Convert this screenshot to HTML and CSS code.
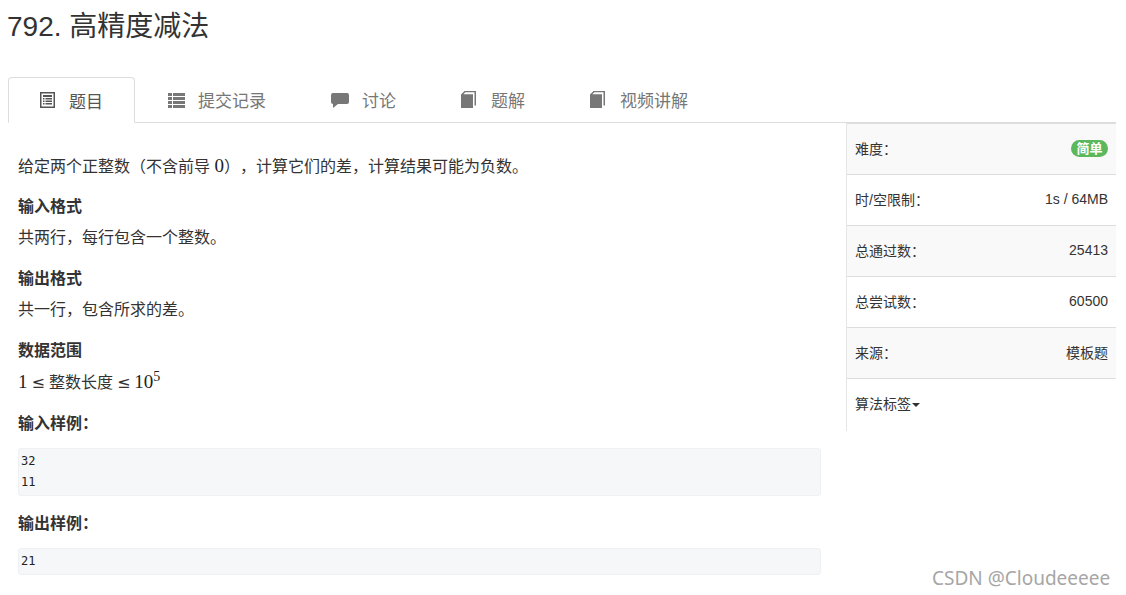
FILE: index.html
```html
<!DOCTYPE html>
<html lang="zh-CN">
<head>
    <meta charset="UTF-8">
    <title>792. 高精度减法</title>
    <link rel="stylesheet" href="styles.css">
</head>
<body>
    <div class="page">
        <h1 class="title">792. 高精度减法</h1>

        <ul class="tabs">
            <li class="tab active">
                <svg class="icon" viewBox="0 0 15 16"><path fill-rule="evenodd" d="M0 0H15V16H0ZM1.500 1.500V14.500H13.500V1.500ZM3 3H12V5H3ZM3 6H4.500V7.500H3ZM5.500 6H12V7.500H5.500ZM3 8.500H4.500V10H3ZM5.500 8.500H12V10H5.500ZM3 11H4.500V12.500H3ZM5.500 11H12V12.500H5.500Z"/></svg>
                题目
            </li>
            <li class="tab">
                <svg class="icon icon-list" viewBox="0 0 17 16"><path d="M0 1H4V4H0ZM5 1H17V4H5ZM0 5H4V8H0ZM5 5H17V8H5ZM0 9H4V12H0ZM5 9H17V12H5ZM0 13H4V16H0ZM5 13H17V16H5Z"/></svg>
                提交记录
            </li>
            <li class="tab">
                <svg class="icon icon-comment" viewBox="0 0 18 16"><path d="M2 1H16Q18 1 18 3V10Q18 12 16 12H7L2 16V12Q0 12 0 10V3Q0 1 2 1Z"/></svg>
                讨论
            </li>
            <li class="tab">
                <svg class="icon icon-book" viewBox="0 0 15 17"><path d="M0 3.500L3.500 0H15V14.500H13.500V1.300H4.300L2.400 3.200H12V17H0Z"/></svg>
                题解
            </li>
            <li class="tab">
                <svg class="icon icon-book" viewBox="0 0 15 17"><path d="M0 3.500L3.500 0H15V14.500H13.500V1.300H4.300L2.400 3.200H12V17H0Z"/></svg>
                视频讲解
            </li>
        </ul>

        <div class="main">
            <div class="content">
                <p class="intro">给定两个正整数（不含前导 <span class="math">0</span>），计算它们的差，计算结果可能为负数。</p>
                <h4>输入格式</h4>
                <p class="after-head">共两行，每行包含一个整数。</p>
                <h4>输出格式</h4>
                <p class="after-head">共一行，包含所求的差。</p>
                <h4>数据范围</h4>
                <p class="after-head"><span class="math">1</span><span class="rel">≤</span>整数长度<span class="rel">≤</span><span class="math">10<sup>5</sup></span></p>
                <h4>输入样例：</h4>
                <pre class="sample">32
11</pre>
                <h4>输出样例：</h4>
                <pre class="sample">21</pre>
            </div>

            <div class="side">
                <div class="side-row striped">
                    <span>难度：</span>
                    <span class="badge">简单</span>
                </div>
                <div class="side-row">
                    <span>时/空限制：</span>
                    <span>1s / 64MB</span>
                </div>
                <div class="side-row striped">
                    <span>总通过数：</span>
                    <span>25413</span>
                </div>
                <div class="side-row">
                    <span>总尝试数：</span>
                    <span>60500</span>
                </div>
                <div class="side-row striped">
                    <span>来源：</span>
                    <span>模板题</span>
                </div>
                <div class="side-row last">
                    <span>算法标签<i class="caret"></i></span>
                </div>
            </div>
        </div>
    </div>

    <div class="watermark">CSDN @Cloudeeeee</div>
</body>
</html>
```

FILE: styles.css
```css
body {
    font-family: "Liberation Sans", "Noto Sans CJK SC", sans-serif;
    color: #333;
    background-color: #fff;
    margin: 0;
    padding: 0;
    text-spacing-trim: space-all;
}

.page {
    width: 1108px;
    margin-left: 8px;
}

.title {
    margin: 0 0 0 -1px;
    padding-top: 7px;
    height: 77px;
    box-sizing: border-box;
    font-size: 28px;
    line-height: 40px;
    font-weight: 400;
}

.tabs {
    display: flex;
    list-style: none;
    margin: 0;
    padding: 0;
    height: 46px;
    box-sizing: border-box;
    border-bottom: 1px solid #ddd;
}

.tab {
    display: flex;
    align-items: center;
    height: 45px;
    padding: 0 31px 0 32px;
    font-size: 17px;
    color: #777;
    border: 1px solid transparent;
    box-sizing: border-box;
}

.tab.active {
    height: 46px;
    padding: 0 31px 0 31px;
    color: #555;
    border-color: #ddd;
    border-bottom-color: #fff;
    border-radius: 4px 4px 0 0;
    background-color: #fff;
}

.icon {
    width: 15px;
    height: 16px;
    margin-right: 14px;
    fill: currentColor;
    flex: none;
}

.icon-list {
    width: 17px;
    margin-right: 13px;
}

.icon-comment {
    width: 18px;
    margin-right: 13px;
}

.icon-book {
    height: 17px;
    margin-right: 15px;
}

.main {
    display: flex;
}

.content {
    width: 838px;
    box-sizing: border-box;
    padding: 31px 25px 0 10px;
}

p {
    margin: 0;
    font-size: 16px;
    line-height: 24px;
}

.intro {
    margin-bottom: -1px;
}

.after-head {
    margin-top: 7px;
}

h4 {
    margin: 17px 0 0;
    font-size: 16px;
    line-height: 24px;
    font-weight: 700;
}

.sample + h4 {
    margin-top: 16px;
}

.math {
    font-family: "Liberation Serif", serif;
    font-size: 19px;
    color: #222;
}

.rel {
    margin: 0 4px;
    font-family: "DejaVu Sans", sans-serif;
    font-size: 16px;
}

sup {
    font-size: 14px;
    line-height: 0;
}

.sample {
    margin: 12px 0 0;
    padding: 2px;
    font-family: "DejaVu Sans Mono", monospace;
    font-size: 12px;
    line-height: 21px;
    color: #222;
    background-color: #f6f7f9;
    border: 1px solid #eff0f2;
    border-radius: 3px;
}

.side {
    width: 270px;
    height: 308px;
    box-sizing: border-box;
    border-left: 1px solid #e6e6e6;
    border-top: 1px solid #ddd;
}

.side-row {
    display: flex;
    justify-content: space-between;
    align-items: center;
    height: 51px;
    box-sizing: border-box;
    padding: 0 8px 2px;
    font-size: 14px;
    border-bottom: 1px solid #ddd;
}

.side-row.striped {
    background-color: #f9f9f9;
}

.side-row.last {
    padding-bottom: 4px;
    border-bottom: none;
}

.badge {
    padding: 0 5.5px;
    font-size: 13px;
    line-height: 17px;
    font-weight: 700;
    color: #fff;
    background-color: #5cb85c;
    border-radius: 9px;
}

.caret {
    display: inline-block;
    margin-left: 1px;
    vertical-align: middle;
    border-top: 4px solid #333;
    border-left: 4px solid transparent;
    border-right: 4px solid transparent;
}

.watermark {
    position: absolute;
    left: 932px;
    top: 565px;
    font-family: "Noto Sans", sans-serif;
    font-size: 19px;
    line-height: 26px;
    color: #a6a6a6;
    white-space: nowrap;
}
```
